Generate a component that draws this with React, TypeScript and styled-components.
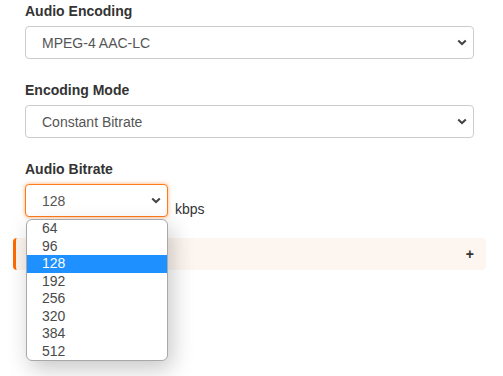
import styled, { createGlobalStyle } from 'styled-components';

const GlobalStyle = createGlobalStyle`
    html, body {
        margin: 0;
        padding: 0;
        background: #FFF;
    }

    body {
        font-family: "Liberation Sans", Arial, sans-serif;
        font-size: 14px;
        line-height: 20px;
        color: #333;
    }
`;

const Page = styled.div`
    width: 503px;
    height: 376px;
    padding: 1px 17px 0 13px;
    box-sizing: border-box;
    overflow: hidden;
`;

const Form = styled.div`
    padding: 0 12px;
    display: flex;
    flex-direction: column;
    gap: 21px;
`;

const Field = styled.div`
    display: flex;
    flex-direction: column;
    gap: 5px;
`;

const Label = styled.label`
    font-weight: bold;
    color: #333;
`;

const Row = styled.div`
    display: flex;
    align-items: flex-end;
    gap: 7px;
`;

const SelectWrap = styled.div<{ $width?: number }>`
    position: relative;
    width: ${props => props.$width ? `${props.$width}px` : '100%'};
`;

const SelectBox = styled.div<{ $focused?: boolean }>`
    height: 33px;
    box-sizing: border-box;
    padding: 0 6px 0 16px;
    display: flex;
    align-items: center;
    justify-content: space-between;
    border: 1px solid ${props => props.$focused ? '#FF7A1A' : '#CCC'};
    border-radius: 4px;
    background: #FFF;
    color: #555;
    box-shadow: ${props => props.$focused ? '0 0 4px rgba(255, 110, 0, 0.55)' : 'none'};
`;

const Chevron = () => (
    <svg width="10" height="7" viewBox="0 0 10 7">
        <path d="M1.2 1.4 L5 5 L8.8 1.4" fill="none" stroke="#444" strokeWidth="2" />
    </svg>
);

const Unit = styled.span`
    color: #333;
    line-height: 16px;
`;

const Options = styled.ul`
    position: absolute;
    top: calc(100% + 2px);
    left: 1px;
    width: 142px;
    box-sizing: border-box;
    margin: 0;
    padding: 0;
    list-style: none;
    background: #FFF;
    border: 1px solid #A8A8A8;
    border-radius: 6px;
    overflow: hidden;
    box-shadow: 4px 8px 22px rgba(0, 0, 0, 0.22);
    z-index: 2;
`;

const Option = styled.li<{ $selected?: boolean }>`
    height: 17.5px;
    line-height: 17.5px;
    padding-left: 15px;
    color: ${props => props.$selected ? '#FFF' : '#4A4A4A'};
    background: ${props => props.$selected ? '#1E90FF' : 'transparent'};
`;

const Panel = styled.div`
    margin-top: 21px;
    height: 32px;
    box-sizing: border-box;
    padding: 0 12px 0 9px;
    display: flex;
    align-items: center;
    justify-content: flex-end;
    background: #FDF5EF;
    border-left: 3px solid #FF6A00;
    border-radius: 4px;
    font-weight: bold;
    color: #333;
`;

const BITRATES = ['64', '96', '128', '192', '256', '320', '384', '512'];

const App = () => (
    <Page>
        <GlobalStyle />
        <Form>
            <Field>
                <Label>Audio Encoding</Label>
                <SelectWrap>
                    <SelectBox>
                        MPEG-4 AAC-LC
                        <Chevron />
                    </SelectBox>
                </SelectWrap>
            </Field>
            <Field>
                <Label>Encoding Mode</Label>
                <SelectWrap>
                    <SelectBox>
                        Constant Bitrate
                        <Chevron />
                    </SelectBox>
                </SelectWrap>
            </Field>
            <Field>
                <Label>Audio Bitrate</Label>
                <Row>
                    <SelectWrap $width={143}>
                        <SelectBox $focused>
                            128
                            <Chevron />
                        </SelectBox>
                        <Options>
                            {BITRATES.map(rate =>
                                <Option key={rate} $selected={rate === '128'}>{rate}</Option>
                            )}
                        </Options>
                    </SelectWrap>
                    <Unit>kbps</Unit>
                </Row>
            </Field>
        </Form>
        <Panel>
            <span>+</span>
        </Panel>
    </Page>
);

export default App;
